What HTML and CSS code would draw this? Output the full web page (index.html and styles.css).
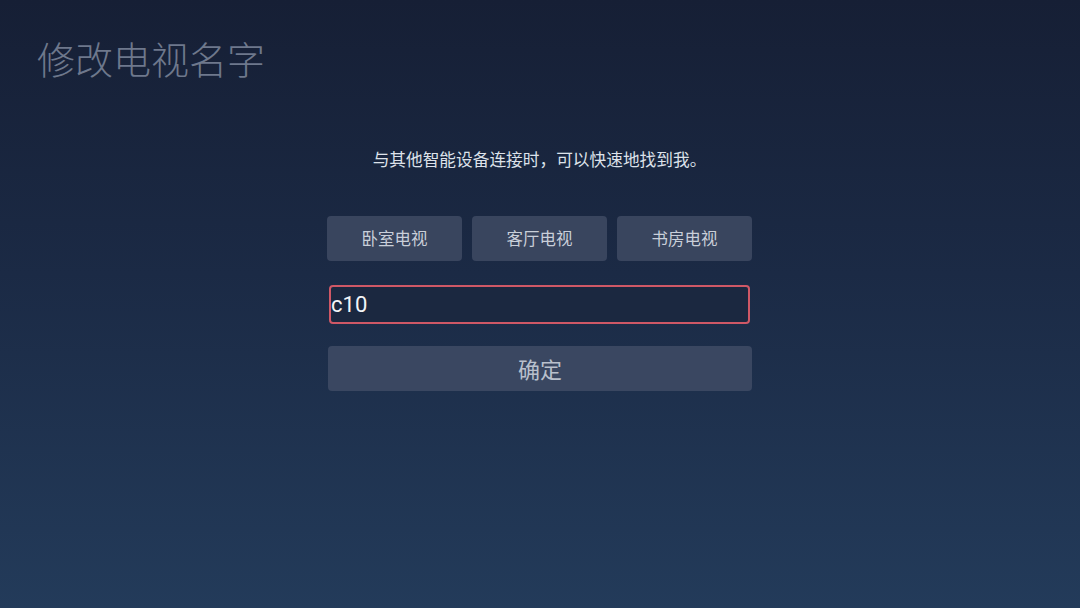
FILE: index.html
```html
<!DOCTYPE html>
<html lang="zh">
<head>
<meta charset="utf-8">
<title>修改电视名字</title>
<link rel="stylesheet" href="styles.css">
</head>
<body>
<div class="screen">
  <h1 class="title">修改电视名字</h1>
  <div class="panel">
    <p class="hint">与其他智能设备连接时，可以快速地找到我。</p>
    <div class="presets">
      <div class="preset">卧室电视</div>
      <div class="preset">客厅电视</div>
      <div class="preset">书房电视</div>
    </div>
    <div class="input">c10</div>
    <div class="confirm">确定</div>
  </div>
</div>
</body>
</html>
```
FILE: styles.css
```css
html, body {
  margin: 0;
  padding: 0;
}
body {
  width: 1080px;
  height: 608px;
  overflow: hidden;
  font-family: "Noto Sans CJK SC", "Noto Sans", sans-serif;
}
.screen {
  box-sizing: border-box;
  width: 1080px;
  height: 608px;
  padding-top: 34px;
  background: linear-gradient(180deg, #161f35 0%, #1b2a45 45%, #233b5a 100%);
}
.title {
  margin: 0 0 0 37px;
  font-size: 38px;
  line-height: 48px;
  font-weight: 300;
  color: #6e788c;
  letter-spacing: 0;
}
.panel {
  width: 425px;
  margin: 65px 0 0 327px;
  display: flex;
  flex-direction: column;
}
.hint {
  margin: 0;
  text-align: center;
  font-size: 16.7px;
  line-height: 24px;
  color: #dde2ea;
}
.presets {
  margin-top: 45px;
  display: flex;
  gap: 10px;
}
.preset {
  flex: 1;
  height: 45px;
  line-height: 45px;
  text-align: center;
  font-size: 16.5px;
  color: #c9cfd9;
  background: #39455e;
  border-radius: 4px;
}
.input {
  box-sizing: border-box;
  margin: 24px 2px 0;
  height: 39px;
  padding: 0;
  border: 2px solid #cf5866;
  border-radius: 4px;
  background: #1b2840;
  font-family: Roboto, "Noto Sans", sans-serif;
  font-size: 22px;
  line-height: 35px;
  color: #f2f4f7;
}
.confirm {
  margin: 22px 0 0 1px;
  height: 45px;
  line-height: 45px;
  text-align: center;
  font-size: 22px;
  color: #b9c0cc;
  background: #3a4761;
  border-radius: 4px;
}
```
